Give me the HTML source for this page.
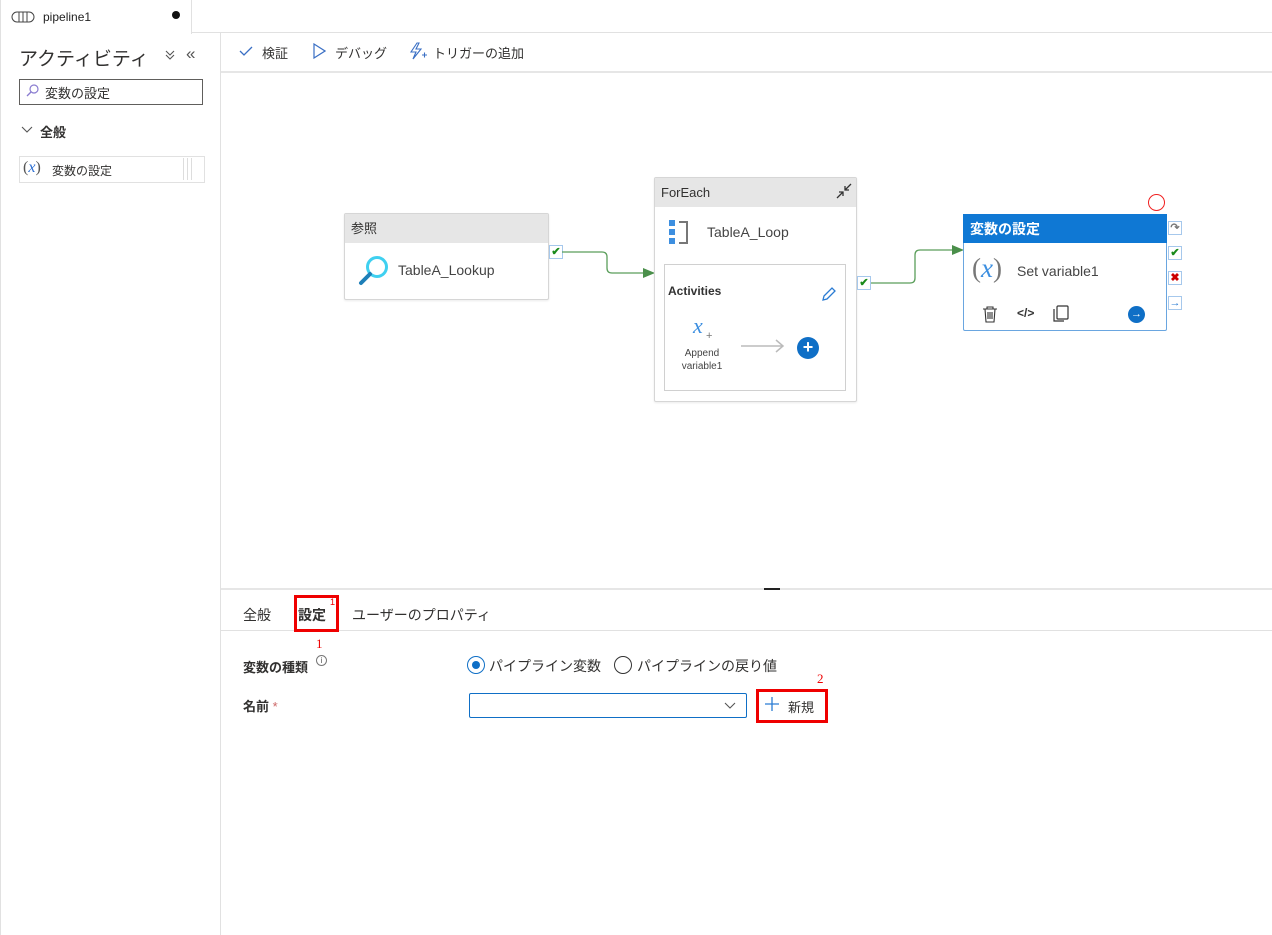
<!DOCTYPE html>
<html><head><meta charset="utf-8"><style>
*{box-sizing:border-box;margin:0;padding:0}
body{width:1272px;height:935px;background:#fff;font-family:"Liberation Sans","Noto Sans CJK JP",sans-serif;color:#323130;position:relative;overflow:hidden;font-size:13px}
.a{position:absolute}
.node{position:absolute;background:#fff;border:1px solid #d6d6d6;border-radius:2px;box-shadow:0 1px 2px rgba(0,0,0,.08)}
.hdr{background:#e6e6e6;height:29px;line-height:29px;padding-left:6px;font-size:13px;color:#323130}
.port{position:absolute;width:14px;height:14px;border:1px solid #a6c8ec;background:#fff;font-size:11px;line-height:12px;text-align:center;font-weight:bold}
</style></head><body>
<!-- tab bar -->
<div class="a" style="left:0;top:0;width:1272px;height:33px;border-bottom:1px solid #e1e1e1"></div>
<div class="a" style="left:0;top:0;width:192px;height:34px;background:#fff;border-right:1px solid #e1e1e1;border-left:1px solid #e1e1e1"></div>
<svg class="a" style="left:11px;top:11px" width="24" height="12"><rect x="1" y="1" width="22" height="10" rx="5" fill="none" stroke="#444"/><line x1="8" y1="1" x2="8" y2="11" stroke="#444"/><line x1="12" y1="1" x2="12" y2="11" stroke="#444"/><line x1="16" y1="1" x2="16" y2="11" stroke="#444"/></svg>
<div class="a" style="left:43px;top:10px;font-size:12px;color:#222">pipeline1</div>
<div class="a" style="left:172px;top:11px;width:8px;height:8px;border-radius:50%;background:#111"></div>
<!-- left panel -->
<div class="a" style="left:220px;top:33px;width:1px;height:902px;background:#e1e1e1"></div>
<div class="a" style="left:0;top:33px;width:1px;height:902px;background:#e1e1e1"></div>
<div class="a" style="left:19px;top:44px;font-size:19px;color:#323130">アクティビティ</div>
<svg class="a" style="left:165px;top:49px" width="10" height="12"><path d="M1 2 L5 6 L9 2 M1 6 L5 10 L9 6" fill="none" stroke="#555" stroke-width="1.1"/></svg>
<div class="a" style="left:186px;top:44px;font-size:17px;color:#555">«</div>
<div class="a" style="left:19px;top:79px;width:184px;height:26px;border:1px solid #605e5c"></div>
<svg class="a" style="left:26px;top:84px" width="13" height="13"><circle cx="8" cy="5" r="4" fill="none" stroke="#8a7cd0" stroke-width="1.2"/><line x1="5" y1="8" x2="1" y2="12" stroke="#8a7cd0" stroke-width="1.3"/></svg>
<div class="a" style="left:45px;top:83px;font-size:13px">変数の設定</div>
<svg class="a" style="left:21px;top:125px" width="12" height="10"><path d="M1 2 L6 7 L11 2" fill="none" stroke="#555" stroke-width="1.1"/></svg>
<div class="a" style="left:40px;top:122px;font-size:13px;font-weight:bold">全般</div>
<div class="a" style="left:19px;top:156px;width:186px;height:27px;border:1px solid #e1e1e1"></div>
<div class="a" style="left:23px;top:159px;font-size:16px;color:#555;font-family:'Liberation Serif',serif">(<i style="color:#2b6dd1">x</i>)</div>
<div class="a" style="left:52px;top:162px;font-size:12px">変数の設定</div>
<div class="a" style="left:183px;top:158px;width:1px;height:22px;background:#ddd;box-shadow:4px 0 #ddd,8px 0 #ddd"></div>
<!-- toolbar -->
<div class="a" style="left:221px;top:71px;width:1051px;height:2px;background:#e6e6e6"></div>
<svg class="a" style="left:239px;top:45px" width="14" height="12"><path d="M1 6 L5 10 L13 2" fill="none" stroke="#3a6fc4" stroke-width="1.3"/></svg>
<div class="a" style="left:262px;top:43px;font-size:13px">検証</div>
<svg class="a" style="left:312px;top:43px" width="14" height="16"><path d="M2 1 L13 8 L2 15 Z" fill="none" stroke="#3a6fc4" stroke-width="1.2"/></svg>
<div class="a" style="left:335px;top:43px;font-size:13px">デバッグ</div>
<svg class="a" style="left:408px;top:42px" width="20" height="19"><path d="M9 1 L3 10 L8 10 L5 17 L13 7 L8 7 L11 1 Z" fill="none" stroke="#3a6fc4" stroke-width="1.1"/><path d="M14 13 h5 M16.5 10.5 v5" stroke="#3a6fc4" stroke-width="1.1"/></svg>
<div class="a" style="left:433px;top:43px;font-size:13px">トリガーの追加</div>
<!-- Lookup node -->
<div class="node" style="left:344px;top:213px;width:205px;height:87px"><div class="hdr">参照</div></div>
<svg class="a" style="left:358px;top:254px" width="32" height="32"><circle cx="19" cy="13" r="9.5" fill="none" stroke="#3fd0f0" stroke-width="3"/><line x1="12" y1="20" x2="3" y2="29" stroke="#1e7fb8" stroke-width="4" stroke-linecap="round"/></svg>
<div class="a" style="left:398px;top:262px;font-size:14px;color:#444">TableA_Lookup</div>
<div class="port" style="left:549px;top:245px;color:#1a8a1a">✔</div>
<svg class="a" style="left:562px;top:240px" width="100" height="40"><path d="M0 12 H40 Q45 12 45 17 V28 Q45 33 50 33 H81" fill="none" stroke="#5a9e5a" stroke-width="1.3"/><path d="M81 28 L93 33 L81 38 Z" fill="#4a8f4a"/></svg>
<!-- ForEach -->
<div class="node" style="left:654px;top:177px;width:203px;height:225px"><div class="hdr">ForEach</div></div>
<svg class="a" style="left:835px;top:182px" width="18" height="18"><path d="M16 2 L10 8 M10 4 V8 H14 M2 16 L8 10 M4 10 H8 V14" fill="none" stroke="#333" stroke-width="1.3"/></svg>
<svg class="a" style="left:668px;top:219px" width="22" height="27"><rect x="1" y="1" width="6" height="6" fill="#3d8fe0"/><rect x="1" y="10" width="6" height="6" fill="#3d8fe0"/><rect x="1" y="19" width="6" height="6" fill="#3d8fe0"/><path d="M11 3 H19 V24 H11" fill="none" stroke="#777" stroke-width="2"/></svg>
<div class="a" style="left:707px;top:224px;font-size:14px;color:#444">TableA_Loop</div>
<div class="a" style="left:664px;top:264px;width:182px;height:127px;border:1px solid #d0d0d0"></div>
<div class="a" style="left:668px;top:284px;font-size:12px;font-weight:bold;color:#333">Activities</div>
<svg class="a" style="left:820px;top:287px" width="16" height="16"><path d="M3 13 L4 9 L12 1 L15 4 L7 12 Z M3 13 L7 12" fill="none" stroke="#2b7cd3" stroke-width="1.3"/></svg>
<div class="a" style="left:693px;top:313px;font-size:22px;color:#3d8fe0;font-family:'Liberation Serif',serif;font-style:italic">x</div>
<div class="a" style="left:706px;top:330px;font-size:11px;color:#777">+</div>
<div class="a" style="left:672px;top:347px;width:60px;text-align:center;font-size:10px;line-height:13px;color:#444">Append<br>variable1</div>
<svg class="a" style="left:740px;top:338px" width="46" height="16"><path d="M1 8 H43 M36 2 L43 8 L36 14" fill="none" stroke="#bbb" stroke-width="1.5"/></svg>
<div class="a" style="left:797px;top:337px;width:22px;height:22px;border-radius:50%;background:#0f6fc6;color:#fff;text-align:center;font-size:18px;line-height:21px;font-weight:bold">+</div>
<div class="port" style="left:857px;top:276px;color:#1a8a1a">✔</div>
<svg class="a" style="left:871px;top:240px" width="100" height="50"><path d="M0 43 H39 Q44 43 44 38 V15 Q44 10 49 10 H81" fill="none" stroke="#5a9e5a" stroke-width="1.3"/><path d="M81 5 L93 10 L81 15 Z" fill="#4a8f4a"/></svg>
<!-- Set variable -->
<div class="a" style="left:1148px;top:194px;width:17px;height:17px;border-radius:50%;border:1.3px solid #f02020"></div>
<div class="a" style="left:963px;top:214px;width:204px;height:117px;border:1px solid #6aa6e0;background:#fff;border-radius:2px"></div>
<div class="a" style="left:963px;top:214px;width:204px;height:29px;background:#0f78d4;color:#fff;font-size:14px;line-height:30px;padding-left:7px;font-weight:bold">変数の設定</div>
<div class="a" style="left:972px;top:253px;font-size:27px;color:#777;font-family:'Liberation Serif',serif">(<i style="color:#3d8fe0">x</i>)</div>
<div class="a" style="left:1017px;top:263px;font-size:14px;color:#444">Set variable1</div>
<svg class="a" style="left:981px;top:305px" width="18" height="19"><path d="M2 4 H16 M6 4 V2 H12 V4 M4 4 L5 17 H13 L14 4 M7 7 V14 M9 7 V14 M11 7 V14" fill="none" stroke="#333" stroke-width="1.1"/></svg>
<div class="a" style="left:1017px;top:306px;font-size:12px;color:#333;font-weight:bold">&lt;/&gt;</div>
<svg class="a" style="left:1052px;top:305px" width="18" height="18"><rect x="5" y="1" width="11" height="13" rx="1" fill="none" stroke="#333" stroke-width="1.2"/><path d="M2 4 V16 H12" fill="none" stroke="#333" stroke-width="1.2"/></svg>
<div class="a" style="left:1128px;top:306px;width:17px;height:17px;border-radius:50%;background:#0f6fc6;color:#fff;text-align:center;font-size:11px;line-height:16px;font-weight:bold">→</div>
<div class="port" style="left:1168px;top:221px;color:#777">↷</div>
<div class="port" style="left:1168px;top:246px;color:#1a8a1a">✔</div>
<div class="port" style="left:1168px;top:271px;color:#c00">✖</div>
<div class="port" style="left:1168px;top:296px;color:#2b7cd3">→</div>
<!-- bottom panel -->
<div class="a" style="left:221px;top:588px;width:1051px;height:2px;background:#e6e6e6"></div>
<div class="a" style="left:764px;top:588px;width:16px;height:2px;background:#222"></div>
<div class="a" style="left:221px;top:630px;width:1051px;height:1px;background:#e1e1e1"></div>
<div class="a" style="left:243px;top:605px;font-size:14px">全般</div>
<div class="a" style="left:298px;top:605px;font-size:14px;font-weight:bold">設定</div>
<div class="a" style="left:294px;top:595px;width:45px;height:37px;border:3px solid #ef0000"></div>
<div class="a" style="left:330px;top:597px;font-size:9px;color:#e00">1</div>
<div class="a" style="left:352px;top:605px;font-size:14px">ユーザーのプロパティ</div>
<div class="a" style="left:316px;top:636px;font-size:13px;color:#e00;font-family:'Liberation Serif',serif">1</div>
<div class="a" style="left:243px;top:657px;font-size:13px;font-weight:bold">変数の種類</div>
<div class="a" style="left:316px;top:655px;width:11px;height:11px;border-radius:50%;border:1px solid #777;font-size:8px;text-align:center;line-height:9px;color:#555">i</div>
<div class="a" style="left:467px;top:656px;width:18px;height:18px;border-radius:50%;border:1px solid #0f6fc6"></div>
<div class="a" style="left:472px;top:661px;width:8px;height:8px;border-radius:50%;background:#0f6fc6"></div>
<div class="a" style="left:489px;top:656px;font-size:14px">パイプライン変数</div>
<div class="a" style="left:614px;top:656px;width:18px;height:18px;border-radius:50%;border:1px solid #333"></div>
<div class="a" style="left:637px;top:656px;font-size:14px">パイプラインの戻り値</div>
<div class="a" style="left:243px;top:696px;font-size:13px;font-weight:bold">名前 <span style="color:#c66;font-weight:normal">*</span></div>
<div class="a" style="left:469px;top:693px;width:278px;height:25px;border:1px solid #0f6fc6;border-radius:2px"></div>
<svg class="a" style="left:724px;top:702px" width="12" height="8"><path d="M1 1 L6 6 L11 1" fill="none" stroke="#555" stroke-width="1.1"/></svg>
<div class="a" style="left:817px;top:671px;font-size:13px;color:#e00;font-family:'Liberation Serif',serif">2</div>
<div class="a" style="left:756px;top:689px;width:72px;height:34px;border:3px solid #ef0000"></div>
<svg class="a" style="left:764px;top:696px" width="16" height="16"><path d="M8 1 V15 M1 8 H15" stroke="#2b7cd3" stroke-width="1.3"/></svg>
<div class="a" style="left:788px;top:697px;font-size:13px">新規</div>
</body></html>
